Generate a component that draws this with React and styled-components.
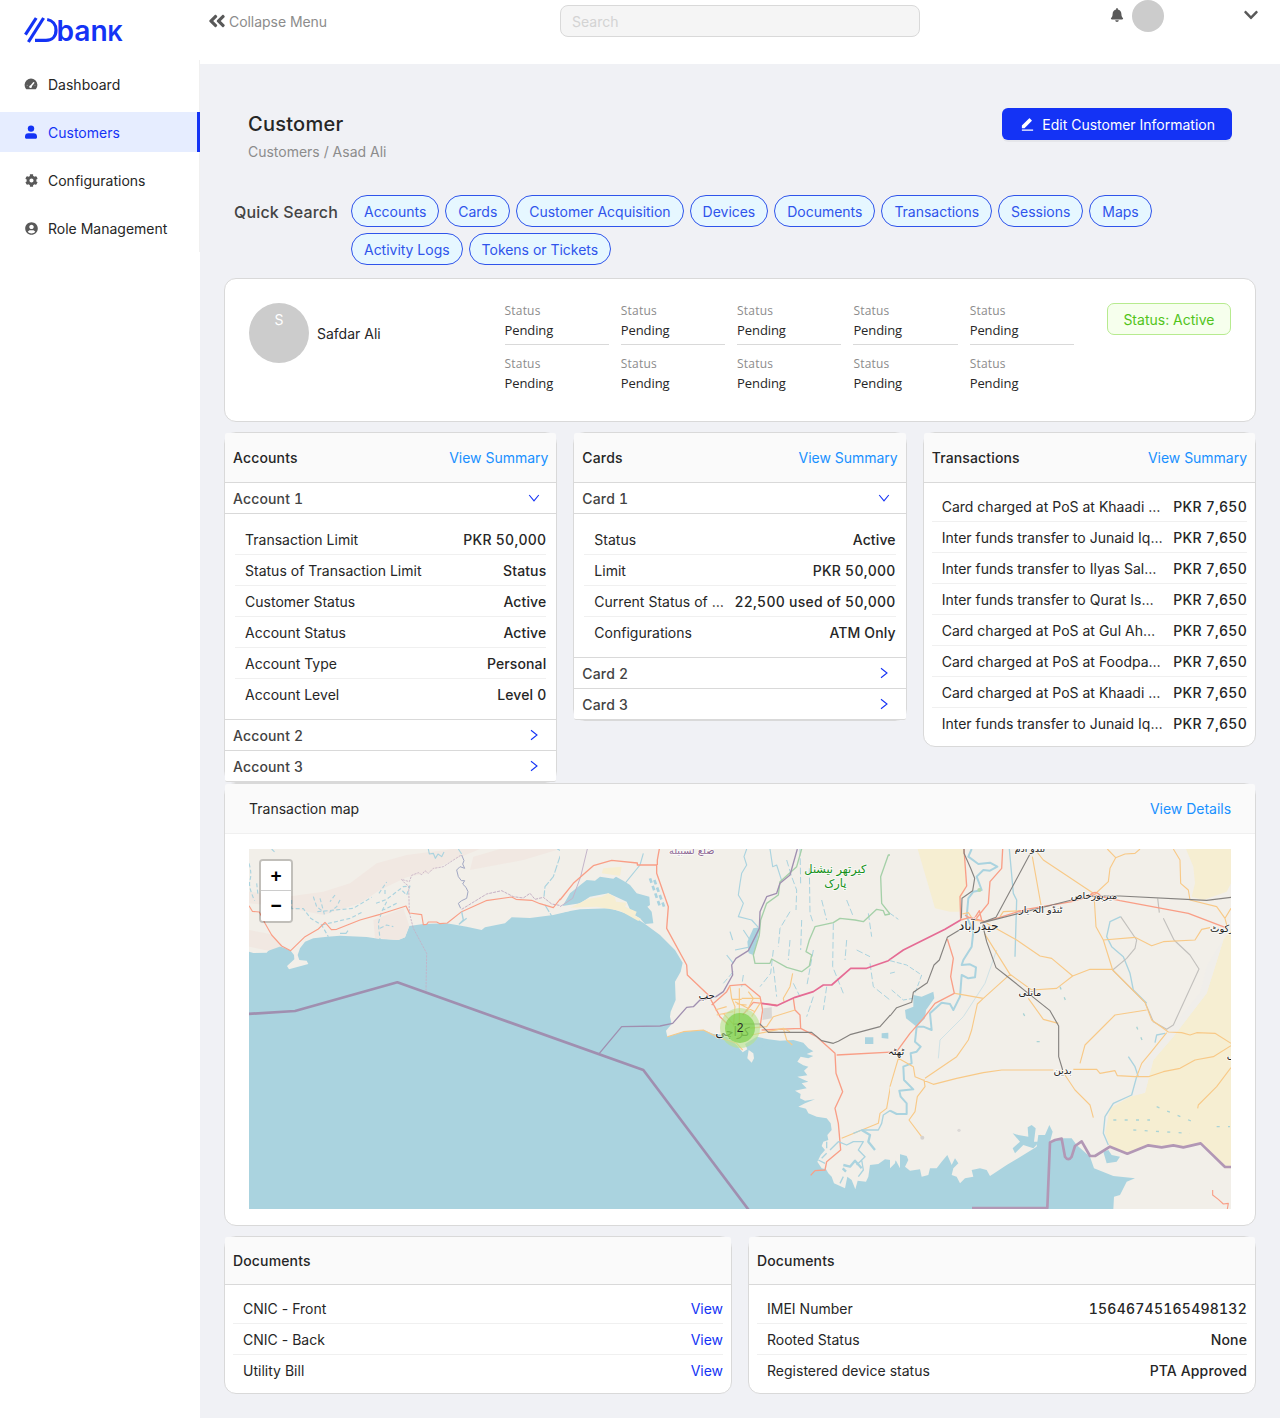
import React, { useState } from 'react';
import styled, { createGlobalStyle, css } from 'styled-components';
import { FaCog, FaUserCircle, FaBell, FaAngleDoubleLeft, FaChevronDown } from 'react-icons/fa';
import { RiEditFill } from 'react-icons/ri';

const GlobalStyle = createGlobalStyle`
  *, *::before, *::after { box-sizing: border-box; }
  body {
    margin: 0;
    background: #f0f1f5;
    color: #262626;
    font: 14px/22px Inter, 'Liberation Sans', sans-serif;
  }
  button, input { font: inherit; }
`;

const Shell = styled.div`
  display: grid;
  grid-template-columns: 200px 1fr;
  min-height: 1418px;
`;

const Sidebar = styled.aside`
  background: #fff;
`;

const LogoBox = styled.div`
  height: 60px;
  padding: 16px 0 0 22px;
  svg { display: block; overflow: visible; }
`;

const Menu = styled.nav`
  display: flex;
  flex-direction: column;
  gap: 8px;
  padding: 4px 0;
  box-shadow: inset -1px 0 #f0f0f0;
`;

const MenuItem = styled.a`
  display: flex;
  align-items: center;
  height: 40px;
  padding: 1px 0 0 24px;
  color: ${p => (p.$active ? '#1433f5' : '#262626')};
  background: ${p => (p.$active ? '#e6edff' : 'transparent')};
  border-right: 3px solid ${p => (p.$active ? '#1433f5' : 'transparent')};
`;

const MenuIcon = styled.span`
  display: flex;
  justify-content: center;
  width: 14px;
  margin: -1px 10px 0 0;
  color: ${p => (p.$active ? '#1433f5' : '#595959')};
`;

const TopBar = styled.header`
  display: grid;
  grid-template-columns: 350px 360px 1fr;
  align-items: start;
  height: 64px;
  padding: 0 22px 0 10px;
  background: #fff;
`;

const Collapse = styled.div`
  display: flex;
  align-items: center;
  gap: 4px;
  padding-top: 11px;
  color: #8c8c8c;
  letter-spacing: -0.05px;
  svg { color: #595959; margin: -3px -2px 0 -3px; }
`;

const Search = styled.input`
  width: 360px;
  height: 32px;
  margin-top: 5px;
  padding: 1px 11px 0;
  background: #f5f5f5;
  border: 1px solid #d9d9d9;
  border-radius: 8px;
  &::placeholder { color: #d3d3d3; }
`;

const UserArea = styled.div`
  display: flex;
  align-items: center;
  height: 32px;
  color: #595959;
`;

const BellSlot = styled.span`
  display: flex;
  margin: -2px 8px 0 auto;
`;

const ChevronSlot = styled.span`
  display: flex;
  margin: -2px -1px 0 79px;
`;

const Avatar = styled.div`
  flex: none;
  width: ${p => p.$size}px;
  height: ${p => p.$size}px;
  border-radius: 50%;
  background: #ccc;
  color: #fff;
  line-height: 34px;
  text-align: center;
`;

const Content = styled.main`
  padding: 44px 24px 24px;
`;

const PageHead = styled.div`
  display: flex;
  justify-content: space-between;
  align-items: flex-start;
  padding: 0 24px;
`;

const Title = styled.h1`
  margin: 0;
  font-size: 20px;
  line-height: 32px;
  font-weight: 500;
  letter-spacing: 0.25px;
`;

const Crumbs = styled.div`
  margin-top: 1px;
  color: #8c8c8c;
  letter-spacing: -0.01px;
`;

const PrimaryButton = styled.button`
  display: flex;
  align-items: center;
  gap: 7px;
  height: 32px;
  padding: 2px 17px 0 18px;
  border: 0;
  border-radius: 6px;
  background: #1433f5;
  color: #fff;
  box-shadow: 0 2px 0 rgba(0, 0, 0, 0.045);
  svg { margin-top: -1px; }
`;

const QuickSearch = styled.section`
  display: flex;
  align-items: flex-start;
  margin: 32px 0 13px;
  padding-left: 10px;
`;

const QuickLabel = styled.div`
  flex: none;
  width: 117px;
  padding-top: 6px;
  font-size: 16px;
  font-weight: 500;
  letter-spacing: 0.15px;
  color: #434343;
`;

const Tags = styled.div`
  display: flex;
  flex-wrap: wrap;
  gap: 6px;
`;

const Tag = styled.button`
  height: 32px;
  padding: 2px 12px 0;
  border: 1px solid #2f54eb;
  border-radius: 16px;
  background: #e6f7ff;
  color: #2f54eb;
  letter-spacing: -0.02px;
`;

const Card = styled.section`
  min-width: 0;
  background: #fff;
  border: 1px solid #d9d9d9;
  border-radius: 12px;
`;

const ProfileCard = styled(Card)`
  display: flex;
  align-items: flex-start;
  height: 144px;
  margin-bottom: 10px;
  padding: 24px;
`;

const ProfileName = styled.div`
  display: flex;
  align-items: center;
  gap: 8px;
  width: 255.5px;
`;

const NameText = styled.span`
  padding-top: 2px;
`;

const StatusGrid = styled.div`
  display: grid;
  grid-template-columns: repeat(5, 1fr);
  gap: 11px 12px;
  width: 569.5px;
`;

const StatusCell = styled.div`
  padding-bottom: 3px;
  border-bottom: 1px solid ${p => (p.$ruled ? '#d9d9d9' : 'transparent')};
  font-family: 'Open Sans', 'Noto Sans', sans-serif;
`;

const StatusLabel = styled.div`
  font-size: 12px;
  line-height: 16px;
  letter-spacing: 0.2px;
  color: #8c8c8c;
`;

const StatusValue = styled.div`
  margin-top: 1px;
  font-size: 13px;
  line-height: 21px;
  letter-spacing: -0.1px;
`;

const StatusChip = styled.div`
  height: 32px;
  margin-left: auto;
  padding: 5px 15.5px 0;
  border: 1px solid #b7eb8f;
  border-radius: 7px;
  background: #f6ffed;
  color: #52c41a;
`;

const Columns = styled.div`
  display: grid;
  grid-template-columns: repeat(${p => p.$count}, minmax(0, 1fr));
  align-items: start;
  gap: 16px;
`;

const CardHead = styled.div`
  display: flex;
  justify-content: space-between;
  align-items: center;
  height: ${p => p.$height || 50}px;
  padding: 0 ${p => p.$inset || 8}px;
  border-bottom: 1px solid ${p => (p.$soft ? '#f0f0f0' : '#d9d9d9')};
  border-radius: 2px 2px 0 0;
  background: #fafafa;
`;

const CardTitle = styled.h2`
  margin: 0;
  font-size: 14px;
  font-weight: ${p => (p.$regular ? 400 : 500)};
  letter-spacing: ${p => (p.$regular ? 0 : 0.15)}px;
`;

const Link = styled.a`
  color: ${p => (p.$strong ? '#1433f5' : '#1890ff')};
  letter-spacing: -0.02px;
`;

const FoldHead = styled.button`
  display: flex;
  justify-content: space-between;
  align-items: center;
  width: 100%;
  height: 31px;
  padding: 1px 16px 0 8px;
  border: 0;
  border-bottom: 1px solid #d9d9d9;
  border-radius: ${p => (p.$last ? '0 0 2px 2px' : 0)};
  background: #fff;
  color: #434343;
  font-weight: 500;
  font-variant-numeric: tabular-nums;
  letter-spacing: 0.15px;
  svg { color: #1433f5; margin-top: -1px; }
`;

const Rows = styled.div`
  padding: ${p => (p.$nested ? '10px' : '8px')};
  ${p => p.$nested && css`border-bottom: 1px solid #d9d9d9;`}
`;

const Row = styled.div`
  display: flex;
  gap: 10px;
  height: 31px;
  padding: 5px 0 0 10px;
  border-bottom: 1px solid #f0f0f0;
  &:last-child { height: 30px; border-bottom: 0; }
`;

const RowLabel = styled.span`
  flex: 1;
  min-width: 0;
  overflow: hidden;
  text-overflow: ellipsis;
  white-space: nowrap;
  letter-spacing: 0.01px;
`;

const RowValue = styled.span`
  flex: none;
  font-weight: 500;
  font-variant-numeric: tabular-nums;
  letter-spacing: ${p => (p.$numeric ? 0.24 : 0.12)}px;
`;

const MapCard = styled(Card)`
  margin-bottom: 10px;
`;

const MapFrame = styled.div`
  position: relative;
  height: 360px;
  margin: 15px 24px 16px;
  overflow: hidden;
`;

const MapSvg = styled.svg`
  display: block;
  width: 100%;
  height: 100%;
`;

const ZoomControl = styled.div`
  position: absolute;
  top: 10px;
  left: 10px;
  border: 2px solid rgba(0, 0, 0, 0.2);
  border-radius: 4px;
  background-clip: padding-box;
`;

const ZoomButton = styled.button`
  display: block;
  width: 30px;
  height: 30px;
  padding: 0;
  border: 0;
  border-bottom: ${p => (p.$first ? '1px solid #ccc' : 0)};
  border-radius: ${p => (p.$first ? '2px 2px 0 0' : '0 0 2px 2px')};
  background: #fff;
  color: #000;
  font: bold 19px/28px 'Liberation Sans', sans-serif;
`;

const Cluster = styled.div`
  position: absolute;
  left: 471px;
  top: 159px;
  width: 40px;
  height: 40px;
  padding: 5px;
  border-radius: 50%;
  background: rgba(181, 226, 140, 0.6);
  span {
    display: block;
    border-radius: 50%;
    background: rgba(110, 204, 57, 0.6);
    font: 12px/30px 'Liberation Sans', sans-serif;
    text-align: center;
  }
`;

const LogoWord = styled.text`
  font-family: Inter, 'Liberation Sans', sans-serif;
  font-size: 28.5px;
  font-weight: 600;
`;

function Logo() {
  return (
    <svg width="104" height="30" viewBox="22 16 104 30" fill="none" stroke="#1433f5">
      <g strokeWidth="3.2">
        <path d="M36.2 18 L25.4 34.6" />
        <path d="M43.6 18 L28.4 42" />
        <path d="M35 40.4 H46 C52.4 40.4 56 36 56 30.2 C56 24.6 52.4 20.4 47.2 19.5" />
      </g>
      <LogoWord x="56.5" y="41" fill="#1433f5" stroke="none" textLength="66.5" lengthAdjust="spacingAndGlyphs">
        ban<tspan fontSize="21.5" fontWeight="700">K</tspan>
      </LogoWord>
    </svg>
  );
}

function GaugeIcon() {
  return (
    <svg width="14" height="14" viewBox="0 0 14 14">
      <path d="M2 12A6.4 6.4 0 1 1 12 12Q11.6 12.3 11 12.3H3Q2.4 12.3 2 12Z" fill="currentColor" />
      <path d="M6.4 9.8L9.7 5.8" stroke="#fff" strokeWidth="1.5" strokeLinecap="round" />
      <circle cx="6.6" cy="9.7" r="1.3" fill="#fff" />
      <path d="M2.8 8.4H3.6M10.6 8.4H11.4" stroke="#fff" strokeWidth="0.5" />
    </svg>
  );
}

function PersonIcon() {
  return (
    <svg width="14" height="14" viewBox="0 0 14 14" fill="currentColor">
      <circle cx="7" cy="3.6" r="3.2" />
      <path d="M1 12.6V11.6A3.4 3.4 0 0 1 4.4 8.2H9.6A3.4 3.4 0 0 1 13 11.6V12.6A1.1 1.1 0 0 1 11.9 13.7H2.1A1.1 1.1 0 0 1 1 12.6Z" />
    </svg>
  );
}

function Arrow({ open }) {
  return (
    <svg width="12" height="12" viewBox="0 0 12 12" fill="none" stroke="currentColor" strokeWidth="1.1">
      <path d={open ? 'M1.2 3 L6 8.8 L10.8 3' : 'M3 1.2 L9 6 L3 10.8'} />
    </svg>
  );
}

const MapLabel = styled.text`
  font-family: 'DejaVu Sans', 'Noto Sans', sans-serif;
  text-anchor: middle;
  paint-order: stroke;
  stroke: rgba(255, 255, 255, 0.7);
  stroke-width: 5px;
  fill: ${p => p.$color || '#222'};
  font-size: ${p => p.$size || 32}px;
`;

const Water = styled.path`fill: #aad3df;`;
const Land = styled.path`fill: #f2efe9;`;
const Desert = styled.path`fill: #f6eed2;`;
const Hill = styled.path`fill: #f1e8e2;`;
const Stroke = styled.path`
  fill: none;
  stroke-linejoin: round;
  stroke: ${p => p.$color};
  stroke-width: ${p => p.$w || 3.4};
  stroke-dasharray: ${p => p.$dash || 'none'};
`;

const trunk = '#f99e86';
const road = '#f8c987';
const motorway = '#e56b94';
const rail = '#85827f';
const border = '#a08fb0';
const park = '#a5d0a8';
const river = '#aad3df';

function WestMap() {
  return (
    <g>
      <Land d="M0 0H990V213L940 225 870 234 815 232 795 250 735 262 725 270 680 260 620 250 550 252 508 258 495 292 475 300 420 297 380 291 300 287 262 290 220 295 195 305 180 325 173 345 178 360 200 362 205 372 147 388 141 378 150 370 163 358 162 345 152 332 135 325 118 318 100 322 85 332 80 338 40 339 27 335Z" />
      <Hill d="M27 155L140 170 250 155 330 130 410 70 500 45 640 27H720L640 60 560 100 500 112 420 150 360 190 250 225 130 200 27 190Z" />
      <Hill d="M690 90L850 60 960 27H780L700 50Z" />
      <Hill d="M400 240L490 205 508 258 495 292 475 300 405 294Z" />
      <Hill d="M27 270L90 282 125 318 85 332 27 320Z" />
      <Stroke $color={river} $dash="12 7" d="M27 70Q36 100 30 120T44 182M50 130L54 165M95 27L104 36M155 180V206H190L212 235 245 255 265 290M245 255L330 235 370 215M232 215L340 205 395 172M220 170L230 200 250 215M240 175L255 230M300 180L290 200 265 220M285 165L270 185M417 160L440 126M435 150V165M408 190L440 178 490 140 510 138 500 165 485 150M440 185L425 215 415 250 420 297M420 265L440 255 460 260M470 190L430 210" />
      <Stroke $color={river} d="M565 27L568 42 580 40 586 55 594 42 605 50 612 36M655 27L665 42M300 280L318 280 324 272" />
      <Stroke $color={river} $dash="24 5" d="M952 27L965 34 940 110 915 140 912 170M915 195L935 228" />
      <Stroke $color="#a1a7c3" $w={3} d="M665 45L672 62 668 72 674 85 660 80 650 90 655 110 664 122 674 122 668 132 678 142 684 155 680 175 665 182 655 190 662 205" />
      <Stroke $color="#c5b0c4" $w={2.5} $dash="7 3" d="M662 46L610 80 595 83 580 85 565 100 555 92 545 104 535 98 515 106 508 125 484 118 495 130 506 138 508 218 520 265 560 340 558 452" />
      <Stroke $color="#c5b0c4" $w={3} $dash="9 3" d="M665 208L740 162 785 152 820 170 850 174 870 160 885 178 910 172 935 192 970 198" />
      <Stroke $color={trunk} d="M27 197L37 214 58 216 75 250 95 285 125 318 152 332 195 290 235 267 255 247 274 269 290 268 360 240 420 223 498 198 508 219 545 224 550 254 560 253 565 246 590 246 600 251 622 249 665 215 738 182 815 171 828 178 875 181 900 191 940 203 990 140" />
      <Stroke $color={river} $w={4} d="M665 215L670 240 658 252 680 235" />
      <Stroke $color={border} $w={8} d="M20 522L165 513 472 427 1210 690 1530 1115" />
      <Water d="M965 198L990 178V205Z" />
    </g>
  );
}

function CentralMap() {
  return (
    <g transform="translate(960 0)">
      <Land d="M0 0H1020V985L1008 962 975 958 955 972 930 975 925 1010 918 1025 893 1022 886 1048 875 1020 862 1010 855 1045 822 1030 815 1010 805 1000 798 988 785 985 772 965 782 945 795 930 785 918 790 905 805 900 802 885 815 870 812 850 800 835 770 830 745 820 738 806 715 800 735 790 765 778 735 782 720 775 722 762 705 752 725 748 740 745 725 730 745 725 728 718 712 710 742 706 732 692 745 680 730 676 712 665 722 650 745 655 760 648 740 642 760 634 745 625 730 608 700 600 660 602 625 598 590 590 555 612 562 628 548 637 530 615 495 585 460 582 430 570 370 575 322 590 318 572 335 552 330 530 332 515 347 480 345 425 362 395 368 368 345 330 300 285 252 250 240 242 212 225 150 205 60 208 0 218Z" />
      <Water d="M8 198L30 160 80 120 105 122 120 110 160 116 168 110 190 122 210 135 230 160 268 170 270 195 262 200 275 215 280 250 255 252 240 235 215 220 200 185 145 160 90 170 60 190Z" />
      <Desert d="M30 203L85 176 125 170 145 160 165 172 168 185 200 188 195 200 230 215 225 228 242 236 235 243 180 212 110 200Z" />
      <Desert d="M130 85L185 80 180 108 125 100Z" />
      <Land d="M566 630L580 640 582 655 575 668 562 655Z" />
      <Water d="M580 265L600 262 590 310 580 345 566 340 562 305Z" />
      <Stroke $color="#c4b4ca" $w={3} d="M82 27L62 110 38 175 0 200" />
      <Stroke $color={river} $w={8} $dash="14 10" d="M270 115L300 200M283 120L312 200" />
      <Stroke $color={river} d="M195 130L240 75 250 40M630 27L638 80 650 75 665 122M560 27L552 50 560 75 545 100 540 130 535 165 550 190 535 230 575 240 595 262M510 275L518 300M525 330L575 320M500 345L520 370M550 270L570 300" />
      <Stroke $color={river} $w={3} $dash="20 8" d="M680 60L695 110 710 150 708 210M720 27L722 130M748 85L750 220 760 250M785 180L800 240M690 215L660 265 655 320M725 240L722 330M820 250L818 380 850 460M640 330L632 400 600 440M690 300L685 360M760 330L740 440M860 300L855 360M890 330L930 350M930 370L940 440 990 480M760 470L740 530M800 440L790 510M550 405L545 440M520 395L490 430M640 380L650 470M700 430L720 470M860 180L880 230M925 220L935 290" />
      <Stroke $color={park} $w={4} d="M725 27L710 80 660 125 655 165 620 190 602 240 598 285 580 345 585 370 630 370 635 357 680 382 725 395 748 378 755 345 738 335 748 300 765 260 820 248 840 235 885 240 910 245 950 208 970 212 975 225 990 222 965 190 962 110 985 45 1000 45V27" />
      <Stroke $color={border} $w={4} d="M712 27L690 105 660 130 650 160 620 170 600 215 598 265 565 332 528 355 515 375 518 405 490 455 468 470 420 480 400 500 380 502 338 550 300 558 185 560 118 640" />
      <Stroke $color={trunk} $w={4} d="M0 180L40 130 100 77 155 61 232 69 232 75H290V100L325 200 320 265 380 375 382 405 445 465 480 530 505 555M298 27L292 60V75M455 495L500 455 510 437 555 433 600 470 608 510 600 560M548 525L580 487 650 495M700 475L705 510 720 525 722 565 605 570M722 565L770 590 825 640 828 700 848 755 825 805 835 850 842 930 800 965 795 990 765 992 752 1006M830 645L1020 635" />
      <Stroke $color={road} d="M510 440L515 475 525 500 520 560M538 445V560M565 455L580 475 560 515M545 475H600M465 510L500 500M470 525L520 515M525 600L560 565 620 560 640 530 705 510M322 590L370 575 430 570 470 590 530 610 548 630M575 585L670 565 690 575M670 565L680 600 697 615M698 400L690 440 670 475 672 485M845 895L955 850 960 820 980 805 1005 660M525 485L585 515M490 520L545 580M515 478H545M530 492L560 495M600 490L575 530" />
      <Stroke $color={motorway} $w={5} d="M605 490L650 497 705 472 760 455 790 435H815L872 385 920 385 985 362 1020 337" />
      <Stroke $color={rail} d="M520 552H600L625 577H755L785 602 820 610 835 604 870 584 960 560 1000 515 1020 500" />
      <path d="M610 505L635 502 636 535 607 540Z" fill="#d9d7d5" />
      <Water d="M915 592H940V612H915ZM965 580L985 578 985 596 965 594Z" />
      <Stroke $color={river} $w={7} d="M905 870L930 885 925 905 945 930M850 975L870 980 885 962 905 985M848 985L858 995" />
      <Stroke $color={river} $w={4} d="M1020 822L990 812 970 825 965 850 955 870 930 870 905 870 880 880M810 930L835 905 860 915 880 905 910 905 895 930 915 950 890 975M775 960L795 970M785 955L800 940M800 925V905M895 1010L910 990 905 960M840 1030L850 1010M1010 740L1018 750M590 625L625 612" />
      <MapLabel x="395" y="43" $size={29} $color="#8d6794">ضلع لسبيله</MapLabel>
      <MapLabel x="826" y="100" $size={34} $color="#159119">کیرتھر نیشنل</MapLabel>
      <MapLabel x="826" y="142" $size={34} $color="#159119">پارک</MapLabel>
      <MapLabel x="440" y="476" $size={31}>حب</MapLabel>
      <MapLabel x="518" y="588" $size={38}>کراچی</MapLabel>
    </g>
  );
}

function EastMap() {
  return (
    <g transform="translate(1950 0)">
      <Land d="M0 0H1100V1140H670V1107L672 1070 690 1065 710 1025 735 1015 670 1008 612 985 600 950 560 915 545 895 520 895 480 905 488 875 478 855 465 885 445 885 440 920 400 945 350 975 315 998 300 1008 290 990 270 985 245 990 250 1010 225 1015 210 1030 200 1010 185 1005 190 985 205 970 195 955 185 975 172 945 155 965 140 985 120 985 115 1005 95 1010 90 988 60 992 45 980 55 960 50 948 20 940 15 970 0 985Z" />
      <Water d="M368 880L385 885 415 890 413 862 425 855 437 865 432 905 448 905 430 925 400 915 375 940 368 925 390 905ZM640 935L655 930 665 945 690 950 680 965 650 970Z" />
      <Desert d="M83 27H220L230 140 212 180 208 215 180 215 135 205Z" />
      <Desert d="M888 27H1023V130L1010 155 940 180 905 170 915 130 910 80Z" />
      <Desert d="M1023 270V985H1005L930 910 880 920 775 915 712 942 660 920 645 880 660 805 720 770 765 758 790 660 850 590 950 460 1000 300Z" />
      <path d="M1000 300L950 460 850 590 790 660 765 758 725 768 745 700 830 580 930 460 950 380 980 330Z" fill="#f0eeea" />
      <Water d="M70 465L95 470 130 455 133 475 108 510 105 535 80 560 48 535 45 510 70 500Z" />
      <Stroke $color={river} $w={6} d="M245 27L235 50 265 72 300 68 322 80 300 92 280 90 260 110 275 150 250 155 235 175 230 230 250 275 245 320 220 360 215 375 240 373 258 382 255 412 235 415 215 405 210 470 190 510 180 492 155 488 120 520 125 570 100 560 80 560 75 605 92 620 80 635 62 640 65 670 40 680 42 720 70 748 28 752 32 770 50 790 50 822 20 822 0 812" />
      <Stroke $color={river} $w={4} d="M358 27L370 160 380 180 375 350M692 230L660 245 650 290 665 320 700 350 720 400 730 450 770 490M740 710L725 765 670 790 645 830 640 880 655 915M715 650L735 680 745 710M795 608L800 585 825 580" />
      <Stroke $color="#cfe2e6" $w={3} d="M320 330L285 430 220 530 150 600 145 655" />
      <Stroke $color={river} $w={3} $dash="15 6" d="M0 362L50 375 95 405 75 460M0 400L20 395M5 450L40 480 70 475M0 220L25 238" />
      <Stroke $color="#c2c0bd" d="M692 230L740 300 735 325 710 355 668 390M803 175L808 218M820 235L852 300 900 345 927 387 850 555 830 568 790 545 765 487 668 390" />
      <Stroke $color={road} d="M427 50L453 195M440 35L460 60 610 160M750 27L735 40 705 42 677 53 652 27M677 53L660 85 655 125 612 165 618 260 640 300 668 390 765 487 785 540 835 576 875 578 900 585 920 578 975 580 1023 610M850 27L870 60 872 130 895 150 900 180 980 200 1005 235 1012 262M1023 205L1005 235M640 300L735 292 785 317 820 305 915 300 935 268 960 263M290 250L380 300 450 348 485 355 548 408 600 388H668M548 408L500 445 425 450 360 403 283 280M360 403L280 475 195 460M280 475L262 492 245 570 235 600 200 650 105 715M25 655L70 680 75 710 130 733 200 715 280 698 335 690H490M550 688H620L630 700 675 692 682 707 735 710H775L820 695 870 685 915 660 970 650 1023 617M570 670L585 615 645 555 675 525 770 510M830 578L780 640 755 670 740 710M415 475L460 538 505 550M515 690L555 750 600 795 610 833M102 718L105 740 82 770 75 815 57 840 97 893M25 655L0 740M1023 683L980 740 925 795 923 805M330 230L340 215 395 212M217 222L235 218 250 240 285 245" />
      <Stroke $color={trunk} $w={4} d="M222 27L230 138 210 170 212 240M338 27L335 85 300 125 295 190 255 240M212 240L240 232 285 245 320 235 400 210 545 185 610 165 690 182 895 220 1005 262M172 297L190 355 182 410 193 460 135 490 100 535 60 580 20 635M600 165Q615 150 630 165M0 637L10 636M225 225L250 240 268 212 275 240" />
      <Stroke $color={trunk} d="M968 1050V1065L985 1078 1000 1092 1015 1090 1012 1107" />
      <Stroke $color={rail} d="M420 42L318 232 270 250M222 27V40L242 85 254 115 248 152 216 175 214 235M222 262L172 292 148 360 132 375 112 428 70 457 65 487 20 503 0 528M270 250L545 180 610 168 690 168 950 181 1023 172M278 255L290 305 318 383 350 408 415 460 480 512 506 558V650L518 690" />
      <Stroke $color={motorway} $w={5} d="M212 240L165 268 40 330 0 358" />
      <Stroke $color="#b297b5" $w={8} d="M246 1104H472L480 907 495 900 515 896 525 950Q535 965 545 950L555 918 575 904 600 948 615 948 660 920 712 941 775 916 815 922 850 916 880 922 932 910 1005 981H1023" />
      <Stroke $color="#a9d3d5" $w={4} $dash="9 25" d="M670 840H780M730 870L900 880M800 800L920 850M980 860H1020M440 605H470M510 440L530 490M400 520L410 540M740 560L760 610" />
      <circle cx="97" cy="893" r="6" fill="#d5d2d0" />
      <circle cx="207" cy="871" r="5" fill="#dcd9d7" />
      <circle cx="268" cy="150" r="6" fill="#b5dab0" />
      <MapLabel x="420" y="37" $size={28}>ٹنڈو آدم</MapLabel>
      <MapLabel x="612" y="177" $size={29}>میرپورخاص</MapLabel>
      <MapLabel x="452" y="218" $size={29}>ٹنڈو الہ یار</MapLabel>
      <MapLabel x="266" y="271" $size={37}>حیدرآباد</MapLabel>
      <MapLabel x="1015" y="275" $size={30}>عمرکوٹ</MapLabel>
      <MapLabel x="420" y="467" $size={30}>ماتلی</MapLabel>
      <MapLabel x="18" y="646" $size={30}>ٹھٹہ</MapLabel>
      <MapLabel x="518" y="701" $size={30}>بدین</MapLabel>
      <MapLabel x="1042" y="657" $size={30}>مٹھی</MapLabel>
    </g>
  );
}

function TransactionMap() {
  return (
    <MapFrame>
      <MapSvg viewBox="27 27 2946 1080" preserveAspectRatio="none">
        <rect x="0" y="0" width="3000" height="1140" fill="#aad3df" />
        <WestMap />
        <CentralMap />
        <EastMap />
      </MapSvg>
      <ZoomControl>
        <ZoomButton $first aria-label="Zoom in">+</ZoomButton>
        <ZoomButton aria-label="Zoom out">−</ZoomButton>
      </ZoomControl>
      <Cluster><span>2</span></Cluster>
    </MapFrame>
  );
}

function Fields({ items, nested }) {
  return (
    <Rows $nested={nested}>
      {items.map(([label, value], i) => (
        <Row key={i}>
          <RowLabel>{label}</RowLabel>
          {value === 'View'
            ? <Link $strong>View</Link>
            : <RowValue $numeric={/\d{3}/.test(value)}>{value}</RowValue>}
        </Row>
      ))}
    </Rows>
  );
}

function FoldCard({ title, name, items }) {
  const [open, setOpen] = useState(1);
  return (
    <Card>
      <CardHead>
        <CardTitle>{title}</CardTitle>
        <Link>View Summary</Link>
      </CardHead>
      {[1, 2, 3].map(n => (
        <React.Fragment key={n}>
          <FoldHead $last={n === 3} onClick={() => setOpen(open === n ? 0 : n)}>
            {name} {n}
            <Arrow open={open === n} />
          </FoldHead>
          {open === n && <Fields nested items={items} />}
        </React.Fragment>
      ))}
    </Card>
  );
}

const menu = [
  ['Dashboard', <GaugeIcon />],
  ['Customers', <PersonIcon />],
  ['Configurations', <FaCog size={13} />],
  ['Role Management', <FaUserCircle size={13} />],
];

const tags = ['Accounts', 'Cards', 'Customer Acquisition', 'Devices', 'Documents', 'Transactions', 'Sessions', 'Maps', 'Activity Logs', 'Tokens or Tickets'];

const account = [
  ['Transaction Limit', 'PKR 50,000'],
  ['Status of Transaction Limit', 'Status'],
  ['Customer Status', 'Active'],
  ['Account Status', 'Active'],
  ['Account Type', 'Personal'],
  ['Account Level', 'Level 0'],
];

const card = [
  ['Status', 'Active'],
  ['Limit', 'PKR 50,000'],
  ['Current Status of Limit', '22,500 used of 50,000'],
  ['Configurations', 'ATM Only'],
];

const transactions = [
  'Card charged at PoS at Khaadi Store',
  'Inter funds transfer to Junaid Iqbal',
  'Inter funds transfer to Ilyas Salman',
  'Inter funds transfer to Qurat Ismail',
  'Card charged at PoS at Gul Ahmed',
  'Card charged at PoS at Foodpanda',
  'Card charged at PoS at Khaadi Store',
  'Inter funds transfer to Junaid Iqbal',
].map(t => [t, 'PKR 7,650']);

const documents = [['CNIC - Front', 'View'], ['CNIC - Back', 'View'], ['Utility Bill', 'View']];

const device = [
  ['IMEI Number', '15646745165498132'],
  ['Rooted Status', 'None'],
  ['Registered device status', 'PTA Approved'],
];

export default function App() {
  return (
    <Shell>
      <GlobalStyle />
      <Sidebar>
        <LogoBox><Logo /></LogoBox>
        <Menu>
          {menu.map(([label, icon]) => (
            <MenuItem key={label} $active={label === 'Customers'}>
              <MenuIcon $active={label === 'Customers'}>{icon}</MenuIcon>
              {label}
            </MenuItem>
          ))}
        </Menu>
      </Sidebar>
      <div>
        <TopBar>
          <Collapse><FaAngleDoubleLeft size={20} />Collapse Menu</Collapse>
          <Search placeholder="Search" />
          <UserArea>
            <BellSlot><FaBell size={14} /></BellSlot>
            <Avatar $size={32} />
            <ChevronSlot><FaChevronDown size={16} /></ChevronSlot>
          </UserArea>
        </TopBar>
        <Content>
          <PageHead>
            <div>
              <Title>Customer</Title>
              <Crumbs>Customers / Asad Ali</Crumbs>
            </div>
            <PrimaryButton><RiEditFill size={15} />Edit Customer Information</PrimaryButton>
          </PageHead>
          <QuickSearch>
            <QuickLabel>Quick Search</QuickLabel>
            <Tags>{tags.map(t => <Tag key={t}>{t}</Tag>)}</Tags>
          </QuickSearch>
          <ProfileCard>
            <ProfileName><Avatar $size={60}>S</Avatar><NameText>Safdar Ali</NameText></ProfileName>
            <StatusGrid>
              {Array.from({ length: 10 }, (_, i) => (
                <StatusCell key={i} $ruled={i < 5}>
                  <StatusLabel>Status</StatusLabel>
                  <StatusValue>Pending</StatusValue>
                </StatusCell>
              ))}
            </StatusGrid>
            <StatusChip>Status: Active</StatusChip>
          </ProfileCard>
          <Columns $count={3}>
            <FoldCard title="Accounts" name="Account" items={account} />
            <FoldCard title="Cards" name="Card" items={card} />
            <Card>
              <CardHead>
                <CardTitle>Transactions</CardTitle>
                <Link>View Summary</Link>
              </CardHead>
              <Fields items={transactions} />
            </Card>
          </Columns>
          <MapCard>
            <CardHead $inset={24} $soft>
              <CardTitle $regular>Transaction map</CardTitle>
              <Link>View Details</Link>
            </CardHead>
            <TransactionMap />
          </MapCard>
          <Columns $count={2}>
            <Card>
              <CardHead $height={48}><CardTitle>Documents</CardTitle></CardHead>
              <Fields items={documents} />
            </Card>
            <Card>
              <CardHead $height={48}><CardTitle>Documents</CardTitle></CardHead>
              <Fields items={device} />
            </Card>
          </Columns>
        </Content>
      </div>
    </Shell>
  );
}
